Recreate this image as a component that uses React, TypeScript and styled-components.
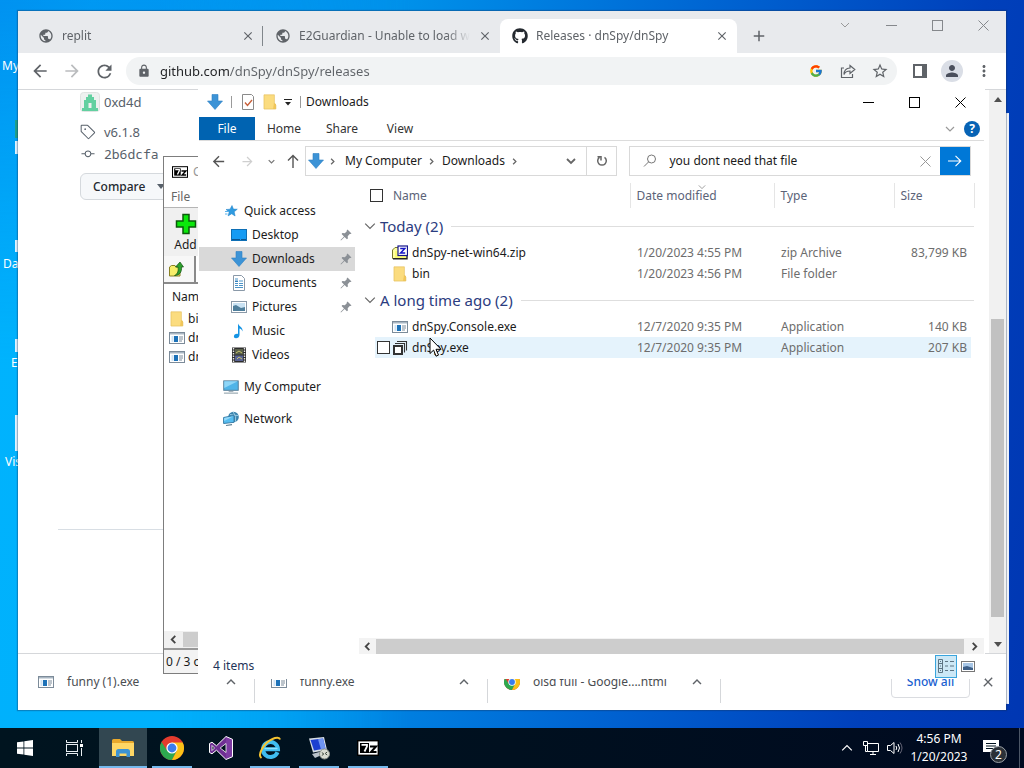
import React from "react";
import styled, { createGlobalStyle, css } from "styled-components";
import {
  MdPublic,
  MdArrowBack,
  MdArrowForward,
  MdRefresh,
  MdLock,
  MdStarBorder,
  MdPerson,
  MdMoreVert,
  MdClose,
  MdAdd,
  MdExpandLess,
} from "react-icons/md";
import { FaGithub } from "react-icons/fa";
import { FcGoogle } from "react-icons/fc";
import { GoTag, GoGitCommit } from "react-icons/go";

const Global = createGlobalStyle`
  *, *::before, *::after { box-sizing: border-box; }
  html, body, #root { height: 100%; }
  body {
    margin: 0;
    overflow: hidden;
    font-family: "Segoe UI", "Noto Sans", "Open Sans", sans-serif;
    font-size: 12px;
    line-height: 16px;
    color: #1b1b1b;
  }
  button, input { font: inherit; color: inherit; }
  button { background: none; border: 0; padding: 0; margin: 0; }
  svg { display: block; flex: none; }
`;

/* ---------- desktop ---------- */

const Desktop = styled.div`
  height: 100vh;
  display: flex;
  flex-direction: column;
  background: linear-gradient(100deg, #0098f2 0%, #00a4f6 8%, #0091ea 35%, #0064d2 62%, #0040bb 85%, #0036b2 100%);
`;

const Workspace = styled.main`
  position: relative;
  flex: 1;
  min-height: 0;
  overflow: hidden;
`;

const LeftShade = styled.div`
  position: absolute;
  inset: 0 auto 0 0;
  width: 40%;
  background: linear-gradient(180deg, rgba(0, 140, 238, 0.5), rgba(0, 180, 253, 0.95) 50%, rgba(0, 178, 252, 0.95));
  mask-image: linear-gradient(90deg, #000 40%, transparent);
`;

const Shortcut = styled.span<{ $top: number; $left: number }>`
  position: absolute;
  top: ${(p) => p.$top}px;
  left: ${(p) => p.$left}px;
  color: #fff;
`;

const ShortcutIcon = styled.span<{ $top: number; $height: number; $color?: string }>`
  position: absolute;
  left: 15px;
  top: ${(p) => p.$top}px;
  width: 20px;
  height: ${(p) => p.$height}px;
  background: ${(p) => p.$color ?? "#dff3ff"};
`;

const BackWindow = styled.div`
  position: absolute;
  inset: 113px 15px 24px 120px;
  background: #fff;
  border: 1px solid #e8eefa;
`;

/* ---------- browser ---------- */

const Browser = styled.section`
  position: absolute;
  inset: 11px 18px 18px 18px;
  display: flex;
  flex-direction: column;
  background: #fff;
  box-shadow: 0 0 1px 1px rgba(20, 50, 90, 0.35);
`;

const TabStrip = styled.div`
  height: 42px;
  display: flex;
  align-items: flex-end;
  padding-left: 8px;
  background: #e8eaed;
`;

const Tab = styled.div<{ $active?: boolean; $divider?: boolean }>`
  position: relative;
  flex: 0 1 237px;
  min-width: 0;
  height: 34px;
  display: flex;
  align-items: center;
  gap: 8px;
  padding: 0 8px 0 12px;
  color: #5f6368;
  border-radius: 8px 8px 0 0;
  ${(p) => p.$active && css`background: #fff;`}
  ${(p) =>
    p.$divider &&
    css`
      &::after {
        content: "";
        position: absolute;
        right: 0;
        top: 7px;
        width: 1px;
        height: 20px;
        background: #80868b;
      }
    `}
`;

const TabTitle = styled.span`
  flex: 1;
  min-width: 0;
  overflow: hidden;
  white-space: nowrap;
  mask-image: linear-gradient(90deg, #000 calc(100% - 24px), transparent);
`;

const IconButton = styled.button<{ $w?: number; $h?: number; $color?: string }>`
  flex: none;
  width: ${(p) => p.$w ?? 32}px;
  height: ${(p) => p.$h ?? 28}px;
  display: flex;
  align-items: center;
  justify-content: center;
  color: ${(p) => p.$color ?? "#5f6368"};
`;

const Spacer = styled.div`
  flex: 1;
`;

const CaptionButtons = styled.div`
  display: flex;
  align-self: flex-start;
`;

const BrowserToolbar = styled.div`
  height: 37px;
  display: flex;
  align-items: center;
  padding: 0 6px;
  border-bottom: 1px solid #d5d7da;
`;

const Omnibox = styled.div`
  flex: 1;
  height: 28px;
  display: flex;
  align-items: center;
  margin: 0 7px 0 6px;
  padding: 0 1px 0 11px;
  border-radius: 14px;
  background: #f1f3f4;
`;

const Url = styled.input`
  flex: 1;
  min-width: 0;
  margin-left: 9px;
  padding: 0;
  border: 0;
  outline: 0;
  font-size: 13px;
  line-height: 20px;
  color: transparent;
  background: linear-gradient(90deg, #202124 69px, #5f6368 69px);
  background-clip: text;
`;

const Avatar = styled.span`
  width: 22px;
  height: 22px;
  border-radius: 50%;
  display: flex;
  align-items: center;
  justify-content: center;
  background: #dadee6;
  color: #4a4f5c;
`;

const Page = styled.div`
  flex: 1;
  min-height: 0;
  display: flex;
  justify-content: space-between;
`;

const Release = styled.div`
  width: 300px;
  padding: 2px 0 0 40px;
  color: #57606a;
  font-size: 13px;
  line-height: 20px;
`;

const Meta = styled.div<{ $space: number; $mono?: boolean; $tight?: boolean }>`
  height: 20px;
  display: flex;
  align-items: center;
  gap: ${(p) => (p.$tight ? 4 : 8)}px;
  margin: 0 0 ${(p) => p.$space}px 22px;
  ${(p) => p.$mono && css`font-family: "Noto Sans Mono", "DejaVu Sans Mono", monospace;`}
`;

const Compare = styled.button`
  height: 27px;
  display: flex;
  align-items: center;
  gap: 12px;
  margin-left: 22px;
  padding: 0 12px;
  border: 1px solid #d5d9dd;
  border-radius: 6px;
  background: #f6f8fa;
  color: #24292f;
  font-size: 12px;
  font-weight: 500;
`;

const PageRule = styled.hr`
  margin: 329px 0 0;
  border: 0;
  border-top: 1px solid #d8dee4;
`;

const VScroll = styled.div`
  width: 17px;
  display: flex;
  flex-direction: column;
  align-items: center;
  background: #f1f1f1;
`;

const VThumb = styled.div`
  width: 13px;
  height: 298px;
  margin: 211px 0 auto;
  background: #c1c1c1;
`;

const Shelf = styled.div`
  height: 57px;
  display: flex;
  align-items: center;
  padding: 0 2px 0 4px;
  border-top: 1px solid #d5d7da;
`;

const Download = styled.div`
  flex: 0 1 233px;
  height: 42px;
  display: flex;
  align-items: center;
  gap: 13px;
  padding: 0 15px 0 16px;
  border-right: 1px solid #d5d7da;
  color: #4a4d51;
  white-space: nowrap;
`;

const DownloadName = styled.span`
  flex: 1;
`;

const ShowAll = styled.button`
  width: 79px;
  height: 32px;
  margin-right: 2px;
  border: 1px solid #dadce0;
  border-radius: 4px;
  color: #1a5fd0;
  font-weight: 500;
`;

/* ---------- archive manager ---------- */

const Archive = styled.section`
  position: absolute;
  inset: 156px 380px 54px 163px;
  display: flex;
  flex-direction: column;
  background: #fff;
  border: 1px solid #7d7d7d;
`;

const ArchiveTitle = styled.div`
  height: 29px;
  display: flex;
  align-items: center;
  gap: 5px;
  padding-left: 8px;
  color: #999;
`;

const ArchiveMenu = styled.div`
  height: 22px;
  display: flex;
  align-items: center;
  padding: 0 7px;
  border-bottom: 1px solid #b5b5b5;
  color: #666;
`;

const ArchiveTools = styled.div`
  height: 48px;
  padding: 5px 3px;
  background: #f0f0f0;
`;

const ToolButton = styled.button`
  width: 37px;
  display: flex;
  flex-direction: column;
  align-items: center;
  gap: 2px;
`;

const ArchivePath = styled.div`
  height: 28px;
  display: flex;
  align-items: center;
  gap: 8px;
  padding-left: 4px;
  background: #f7f7f7;
  border-bottom: 2px solid #8a8a8a;
`;

const PathField = styled.div`
  flex: 1;
  height: 26px;
  border-left: 2px solid #8a8a8a;
  background: #fff;
`;

const ArchiveList = styled.div`
  flex: 1;
  padding-left: 5px;
`;

const ArchiveHead = styled.div`
  height: 25px;
  padding: 5px 3px;
`;

const ArchiveRow = styled.div`
  height: 19px;
  display: flex;
  align-items: center;
  gap: 3px;
`;

const ArchiveScroll = styled.div`
  height: 19px;
  display: flex;
  align-items: center;
  border-bottom: 2px solid #999;
  background: #f0f0f0;
`;

const ArchiveStatus = styled.div`
  height: 23px;
  padding: 4px 2px;
  background: #f3f3f3;
`;

/* ---------- file explorer ---------- */

const Explorer = styled.section`
  position: absolute;
  inset: 89px 39px 49px 198px;
  display: flex;
  flex-direction: column;
  background: #fff;
  border: 1px solid #fff;
`;

const ExplorerTitle = styled.header`
  height: 24px;
  display: flex;
  align-items: center;
  padding-left: 8px;
`;

const Bar = styled.span`
  width: 1px;
  height: 12px;
  background: #9a9a9a;
`;

const QuickTools = styled.div<{ $tight?: boolean }>`
  display: flex;
  align-items: center;
  gap: ${(p) => (p.$tight ? 6 : 8)}px;
`;

const TitleText = styled.span`
  margin-left: 5px;
`;

const Ribbon = styled.nav`
  height: 27px;
  display: flex;
  align-items: center;
  padding-top: 3px;
  border-bottom: 1px solid #dcdcdc;
`;

const RibbonTab = styled.button<{ $file?: boolean }>`
  width: ${(p) => (p.$file ? 56 : 58)}px;
  height: 23px;
  background: ${(p) => (p.$file ? "#0063b1" : "transparent")};
  color: ${(p) => (p.$file ? "#fff" : "#333")};
`;

const Help = styled.button`
  width: 16px;
  height: 16px;
  margin: 0 4px 0 5px;
  border-radius: 50%;
  background: #0763b5;
  color: #fff;
  font-weight: 700;
  line-height: 16px;
`;

const AddressRow = styled.div`
  height: 40px;
  display: flex;
  align-items: center;
  padding: 0 13px 0 5px;
`;

const AddressBar = styled.div`
  flex: 10 1 312px;
  max-width: 340px;
  height: 30px;
  display: flex;
  align-items: center;
  margin: 0 12px 0 0;
  border: 1px solid #d9d9d9;
`;

const Crumb = styled.button`
  padding: 0 6px 0 7px;
  white-space: nowrap;
`;

const Refresh = styled(IconButton)`
  border-left: 1px solid #d9d9d9;
`;

const Search = styled.form`
  flex: 11 1 341px;
  height: 30px;
  display: flex;
  align-items: center;
  border: 1px solid #d9d9d9;
  padding-left: 13px;
`;

const SearchInput = styled.input`
  flex: 1;
  min-width: 0;
  margin-left: 12px;
  padding: 0;
  border: 0;
  outline: 0;
`;

const Go = styled(IconButton)`
  background: #0078d7;
`;

const ExplorerBody = styled.div`
  flex: 1;
  min-height: 0;
  display: flex;
  padding-top: 2px;
`;

const Sidebar = styled.aside`
  width: 156px;
  flex: none;
  padding-top: 16px;
`;

const NavItem = styled.a<{ $level?: number; $selected?: boolean; $gap?: boolean }>`
  height: 24px;
  display: flex;
  align-items: center;
  gap: 5px;
  margin-top: ${(p) => (p.$gap ? 8 : 0)}px;
  padding: 0 3px 0 ${(p) => (p.$level ? 32 : 24)}px;
  background: ${(p) => (p.$selected ? "#d9d9d9" : "transparent")};
  color: #1b1b1b;
  text-decoration: none;
`;

const NavLabel = styled.span`
  flex: 1;
  white-space: nowrap;
`;

const Files = styled.div`
  flex: 1;
  min-width: 0;
  display: flex;
  flex-direction: column;
  margin-left: 4px;
`;

const Table = styled.table`
  width: 100%;
  table-layout: fixed;
  border-collapse: collapse;
  white-space: nowrap;
  margin-bottom: auto;
`;

const HeadCell = styled.th`
  position: relative;
  height: 25px;
  padding: 0 6px;
  border-right: 1px solid #e5e5e5;
  text-align: left;
  font-weight: 400;
  color: #5b6378;
`;

const SortMark = styled.span`
  position: absolute;
  top: 0;
  left: calc(50% - 4px);
`;

const NameCell = styled.div`
  display: flex;
  align-items: center;
  gap: 10px;
  padding-left: 5px;
`;

const Check = styled.input`
  appearance: none;
  flex: none;
  width: 13px;
  height: 13px;
  margin: 0;
  border: 1px solid #333;
  background: #fff;
`;

const RowCheck = styled(Check)`
  margin-right: -2px;
`;

const GroupCell = styled.th<{ $first?: boolean }>`
  height: ${(p) => (p.$first ? 34 : 32)}px;
  padding: ${(p) => (p.$first ? 2 : 0)}px 10px 0 5px;
  font-weight: 400;
`;

const Group = styled.div`
  display: flex;
  align-items: center;
  gap: 4px;
  font-size: 15px;
  line-height: 20px;
  color: #2b3c80;

  &::after {
    content: "";
    flex: 1;
    height: 1px;
    margin-left: 4px;
    background: #dedede;
  }
`;

const FileRow = styled.tr<{ $hover?: boolean }>`
  height: 21px;
  ${(p) =>
    p.$hover &&
    css`
      background: linear-gradient(90deg, transparent 16px, #e5f3fc 16px, #e5f3fc calc(100% - 13px), transparent calc(100% - 13px));
    `}
`;

const Cell = styled.td<{ $right?: boolean }>`
  padding: 0 7px;
  color: #6d6d6d;
  text-align: ${(p) => (p.$right ? "right" : "left")};
`;

const FileName = styled.div<{ $hover?: boolean }>`
  display: flex;
  align-items: center;
  gap: 4px;
  padding-left: ${(p) => (p.$hover ? 11 : 26)}px;
  color: #1b1b1b;
`;

const HScroll = styled.div`
  height: 16px;
  flex: none;
  display: flex;
  align-items: center;
  background: #f3f3f3;
`;

const HThumb = styled.div`
  flex: 1;
  height: 15px;
  background: #cdcdcd;
`;

const StatusBar = styled.footer`
  height: 24px;
  display: flex;
  align-items: center;
  justify-content: space-between;
  padding: 0 9px 0 14px;
  color: #1e3358;
`;

const Views = styled.div`
  display: flex;
  align-items: center;
  gap: 4px;
`;

const ViewButton = styled(IconButton)<{ $on?: boolean }>`
  ${(p) => p.$on && css`background: #cce8f6; border: 1px solid #3aa5dd;`}
`;

const Pointer = styled.svg`
  position: absolute;
  left: 429px;
  top: 337px;
`;

/* ---------- taskbar ---------- */

const Taskbar = styled.nav`
  height: 40px;
  flex: none;
  display: flex;
  padding-left: 1px;
  background: linear-gradient(90deg, #00141f, #00101f 50%, #000a20);
  color: #fff;
`;

const TaskButton = styled.button<{ $open?: boolean; $active?: boolean }>`
  position: relative;
  width: 48px;
  margin-right: 1px;
  display: flex;
  align-items: center;
  justify-content: center;
  background: ${(p) => (p.$active ? "#324751" : "transparent")};
  ${(p) =>
    (p.$open || p.$active) &&
    css`
      &::after {
        content: "";
        position: absolute;
        bottom: 0;
        left: ${p.$active ? 0 : 4}px;
        right: ${p.$active ? 0 : 4}px;
        height: 2px;
        background: #76b9ed;
      }
    `}
`;

const TrayButton = styled.button`
  width: 24px;
  display: flex;
  align-items: center;
  justify-content: center;
`;

const Clock = styled.button`
  width: 64px;
  line-height: 18px;
  white-space: nowrap;
`;

const Notice = styled.button`
  position: relative;
  width: 40px;
  margin-right: 8px;
  display: flex;
  align-items: center;
  justify-content: center;
`;

const Badge = styled.span`
  position: absolute;
  left: 19px;
  top: 18px;
  width: 17px;
  height: 17px;
  border: 1px solid #9aa0a6;
  border-radius: 50%;
  background: #2b3138;
  font-size: 12px;
  line-height: 15px;
  text-align: center;
`;

const PeekEdge = styled.div`
  width: 5px;
  border-left: 1px solid #4c5666;
`;

/* ---------- drawings ---------- */

const DownArrow = ({ size = 16 }: { size?: number }) => (
  <svg width={size} height={size} viewBox="0 0 16 16">
    <path d="M5 .5h6V7h4.5L8 15.5.5 7H5z" fill="#3c93d6" stroke="#2b7fc4" strokeWidth=".6" />
  </svg>
);

type ChevronProps = { dir?: "down" | "right" | "left" | "up"; size?: number; color?: string; weight?: number };

const Chevron = ({ dir = "down", size = 10, color = "#666", weight = 1.2 }: ChevronProps) => {
  const paths = { down: "M1 3l4 4 4-4", up: "M1 7l4-4 4 4", right: "M3 1l4 4-4 4", left: "M7 1L3 5l4 4" };
  return (
    <svg width={size} height={size} viewBox="0 0 10 10" fill="none" stroke={color} strokeWidth={weight}>
      <path d={paths[dir]} />
    </svg>
  );
};

const CaptionIcon = ({ kind, color }: { kind: "min" | "max" | "close"; color: string }) => (
  <svg width="11" height="11" viewBox="0 0 11 11" fill="none" stroke={color}>
    {kind === "min" && <path d="M0 5.5h11" />}
    {kind === "max" && <rect x=".5" y=".5" width="10" height="10" />}
    {kind === "close" && <path d="M.5.5l10 10M10.5.5l-10 10" />}
  </svg>
);

const Folder = () => (
  <svg width="16" height="16" viewBox="0 0 16 16">
    <path d="M2 1h10v9l2 1v4H2z" fill="#fbdc7f" />
    <path d="M12 9l2 1v5h-3z" fill="#f2c659" />
    <path d="M2 .8h10.4V10l1.4 1v4H2z" fill="none" stroke="#e9c462" strokeWidth=".8" />
  </svg>
);

const AppFile = () => (
  <svg width="16" height="16" viewBox="0 0 16 16">
    <rect x=".5" y="2.5" width="15" height="11" fill="#fff" stroke="#7c8b99" />
    <path d="M1 3h14v1.5H1z" fill="#a9b6c2" />
    <rect x="2.5" y="6" width="2" height="6" fill="#cfe3f4" />
    <rect x="5" y="6" width="4" height="6" fill="#1d72b8" />
    <path d="M10 7h4M10 9h4M10 11h3" stroke="#7c8b99" />
  </svg>
);

const ZipFile = () => (
  <svg width="16" height="16" viewBox="0 0 16 16">
    <path d="M.5 5L3 2.500h4V13.500H.5z" fill="#ffffa0" stroke="#77772a" />
    <path d="M3 6h11v7.500H3z" fill="#fbfb74" />
    <path d="M1 13.700h14V10" fill="none" stroke="#222" strokeWidth="1.400" />
    <rect x="6" y="1" width="9.500" height="9.500" fill="#fff" stroke="#14148c" strokeWidth="1.200" />
    <path d="M8.200 3.500h4.600l-4.200 4.500h4.600" fill="none" stroke="#1616c8" strokeWidth="1.500" />
  </svg>
);

const StackFile = () => (
  <svg width="16" height="16" viewBox="0 0 16 16" fill="none" stroke="#333">
    <path d="M5 1.500h9.500v9M3 3.500h9.500v9" strokeWidth="1.100" />
    <rect x="2" y="6" width="8" height="8" strokeWidth="2" fill="#fff" />
  </svg>
);

const SevenZip = ({ w = 16, h = 12 }: { w?: number; h?: number }) => (
  <svg width={w} height={h} viewBox="0 0 22 16">
    <rect width="22" height="16" fill="#fff" />
    <rect x=".7" y=".7" width="20.600" height="14.600" fill="none" stroke="#000" strokeWidth="1.400" />
    <path d="M3 3h9v10H3z" fill="#000" />
    <path d="M4.500 4.800h5.500v1.500L7.500 11.500" fill="none" stroke="#fff" strokeWidth="1.800" />
    <path d="M13 6.500h6L14 12h5.500" fill="none" stroke="#000" strokeWidth="2" />
  </svg>
);

const PinIcon = () => (
  <svg width="12" height="12" viewBox="0 0 12 12">
    <path d="M7.500.5l4 4-1 .6-.8-.1-2 2.200.2 2.300-1 .7L4.600 8 1 11.400l-.5-.4L4 7.400 1.600 5.100l.8-1 2.400.2 2-2L6.700 1.400z" fill="#8b9096" />
  </svg>
);

const sideIcons: Record<string, React.ReactNode> = {
  star: (
    <svg width="16" height="16" viewBox="0 0 16 16">
      <path d="M9 2.500l1.400 3.600 3.900.1-3.100 2.600.9 4.200-3.400-2.200-3.600 2.100 1.100-4L3 6.500l4-.3z" fill="#2f9be0" stroke="#1d7fc6" strokeWidth=".5" />
      <path d="M2 8.500h3M2 11h2.500" stroke="#58b3ec" />
    </svg>
  ),
  desktop: (
    <svg width="16" height="16" viewBox="0 0 16 16">
      <rect x=".5" y="2.500" width="15" height="11" fill="#169bf3" stroke="#0e6fb5" />
      <path d="M1 12.500h14" stroke="#0b5590" strokeDasharray="8 1" />
    </svg>
  ),
  downloads: <DownArrow />,
  documents: (
    <svg width="16" height="16" viewBox="0 0 16 16">
      <path d="M2.500.5h8l3 3v12h-11z" fill="#fff" stroke="#8a99a8" />
      <path d="M4 4h3M8 6h4M4 8.500h3M8 8.500h4M4 10.500h3M8 10.500h4M4 12.500h8" stroke="#4b94c8" />
      <path d="M4 5.500h3v1.500H4z" fill="#2f7fbd" />
    </svg>
  ),
  pictures: (
    <svg width="16" height="16" viewBox="0 0 16 16">
      <rect x=".5" y="2.500" width="15" height="11" fill="#fff" stroke="#8a99a8" />
      <rect x="2" y="4" width="12" height="8" fill="#c9e2f3" />
      <path d="M2 7l3-1 5 3 4-1v4H2z" fill="#4f7f9c" />
    </svg>
  ),
  music: (
    <svg width="16" height="16" viewBox="0 0 16 16">
      <path d="M7 .5c1 3 5 3.500 4.600 8-.8-2-2-2.700-3.100-2.900V12c0 2-1.800 3.300-3.500 3.300S2.600 14 3 12.700c.5-1.500 2.400-2.200 4-1.700z" fill="#1594e4" />
    </svg>
  ),
  videos: (
    <svg width="16" height="16" viewBox="0 0 16 16">
      <rect x="1" y=".5" width="14" height="15" fill="#2d2d2d" />
      <path d="M2.500 1v15M13.500 1v15" stroke="#e6e6e6" strokeWidth="1.400" strokeDasharray="1.500 1" />
      <path d="M4 2h8v5.500H4z" fill="#59604a" />
      <path d="M4 8.500h8V14H4z" fill="#5a6494" />
      <path d="M5 6l3-2 3 2M6 12l2-2 3 2" stroke="#c9c36b" fill="none" />
    </svg>
  ),
  computer: (
    <svg width="16" height="16" viewBox="0 0 17 16">
      <rect x=".8" y="1.500" width="15.400" height="10" fill="#4fb4e8" stroke="#527a94" />
      <path d="M1.300 2h14.400L1.300 9z" fill="#8fd6f7" />
      <path d="M6 12.500h5M1 14.500h15" stroke="#7f929e" />
    </svg>
  ),
  network: (
    <svg width="16" height="16" viewBox="0 0 16 16">
      <circle cx="10.500" cy="6" r="5.300" fill="#3a83ad" />
      <path d="M7 3.500q4 1 8.500 1M10 .8q4 4 2.500 10" stroke="#9bcbe2" fill="none" />
      <path d="M.6 6.500L11 4.500v6.800L.6 12.500z" fill="#56bdf0" stroke="#3a7ea8" />
      <path d="M1.200 7l9.200-1.800L1.200 10z" fill="#97dafa" />
      <path d="M3 14.500l6-.8" stroke="#5b7d90" strokeWidth="1.200" />
    </svg>
  ),
};

const ChromeLogo = ({ size }: { size: number }) => (
  <svg width={size} height={size} viewBox="0 0 24 24">
    <circle cx="12" cy="12" r="12" fill="#e33b2e" />
    <path d="M7.200 14.800L1.600 6A12 12 0 0 0 12 24l4.800-9.200z" fill="#2da94f" />
    <path d="M12 6.500h10.700A12 12 0 0 1 12 24l4.800-9.200z" fill="#fbc117" />
    <circle cx="12" cy="12" r="5.600" fill="#fff" />
    <circle cx="12" cy="12" r="4.400" fill="#3b7ded" />
  </svg>
);

const taskIcons = {
  start: (
    <svg width="16" height="16" viewBox="0 0 16 16" fill="#fff">
      <path d="M0 2.300L6.500 1.400v6.200H0zM7.300 1.300L16 0v7.600H7.300zM0 8.400h6.500v6.200L0 13.700zM7.300 8.400H16V16l-8.700-1.200z" />
    </svg>
  ),
  view: (
    <svg width="17" height="16" viewBox="0 0 17 16" fill="none" stroke="#e8eef2">
      <path d="M.5 0v2.500h11V0M.5 16v-2.500h11V16M15.500 0v3M15.500 8v8" />
      <rect x=".5" y="4.500" width="11" height="7" />
      <rect x="14" y="4" width="3" height="3" fill="#fff" stroke="none" />
    </svg>
  ),
  explorer: (
    <svg width="22" height="18" viewBox="0 0 22 18">
      <path d="M0 1.500Q0 0 1.500 0H8l2 2h10.500Q22 2 22 3.500V17H0z" fill="#e9a92c" />
      <path d="M0 4h22v13H0z" fill="#ffd765" />
      <path d="M4 18v-5.500Q4 10 6.500 10h9q2.500 0 2.500 2.500V18h-3.500v-3.500h-7V18z" fill="#3d93d3" />
    </svg>
  ),
  vs: (
    <svg width="24" height="24" viewBox="0 0 24 24">
      <path d="M17 .5l6.500 2.800v17.400L17 23.500 7.500 14.200 3 17.800.5 16.500v-9L3 6.200l4.500 3.600z" fill="#6f2f93" />
      <path d="M17 .5l6.500 2.800v17.400L17 23.500z" fill="#7d3ba2" />
      <path d="M17 7.500v9L11.200 12zM3 9.500v5L5.500 12z" fill="#00121f" stroke="#fff" strokeWidth=".8" />
      <path d="M17 .5l6.500 2.800v17.400L17 23.500 7.500 14.200 3 17.800.5 16.500v-9L3 6.200l4.500 3.600z" fill="none" stroke="#fff" strokeWidth="1" />
    </svg>
  ),
  ie: (
    <svg width="24" height="24" viewBox="0 0 24 24" fill="none">
      <path d="M19.500 16.200A7.500 7.500 0 1 1 20 13.200H7" stroke="#3fbdf0" strokeWidth="4" />
      <path d="M6.500 12.500h13" stroke="#8fe0fb" strokeWidth="1.500" />
      <path d="M3.500 22C-1 19 6 6.500 14.500 3c4-1.800 7-1.500 7.500.5" stroke="#f5c431" strokeWidth="2" />
    </svg>
  ),
  remote: (
    <svg width="24" height="24" viewBox="0 0 24 24">
      <path d="M2 2.500L17 1l3 13-14 2.500z" fill="#d6dde4" />
      <path d="M3.500 4L16 2.600l2.500 10-11.500 2z" fill="#1c3fd0" />
      <path d="M11 3.200l5-.6 2.500 10-4.500.8z" fill="#6f95f2" />
      <path d="M5 18l11-3 3 2-11 5z" fill="#b9c2ca" />
      <circle cx="17.500" cy="18" r="5" fill="#d8dcd2" stroke="#8b918a" />
      <path d="M14.800 16.500l2 1.500-2 1.500M20.200 16l-2 1.500 2 1.500" stroke="#3f4a3f" fill="none" />
    </svg>
  ),
};

/* ---------- data ---------- */

const navigation = [
  { label: "Quick access", icon: "star", level: 0 },
  { label: "Desktop", icon: "desktop", level: 1, pin: true },
  { label: "Downloads", icon: "downloads", level: 1, pin: true, selected: true },
  { label: "Documents", icon: "documents", level: 1, pin: true },
  { label: "Pictures", icon: "pictures", level: 1, pin: true },
  { label: "Music", icon: "music", level: 1 },
  { label: "Videos", icon: "videos", level: 1 },
  { label: "My Computer", icon: "computer", level: 0, gap: true },
  { label: "Network", icon: "network", level: 0, gap: true },
];

const groups = [
  {
    title: "Today (2)",
    files: [
      { name: "dnSpy-net-win64.zip", date: "1/20/2023 4:55 PM", type: "zip Archive", size: "83,799 KB", icon: <ZipFile /> },
      { name: "bin", date: "1/20/2023 4:56 PM", type: "File folder", size: "", icon: <Folder /> },
    ],
  },
  {
    title: "A long time ago (2)",
    files: [
      { name: "dnSpy.Console.exe", date: "12/7/2020 9:35 PM", type: "Application", size: "140 KB", icon: <AppFile /> },
      { name: "dnSpy.exe", date: "12/7/2020 9:35 PM", type: "Application", size: "207 KB", icon: <StackFile />, hover: true },
    ],
  },
];

const downloads = [
  { name: "funny (1).exe", icon: <AppFile /> },
  { name: "funny.exe", icon: <AppFile /> },
  { name: "oisd full - Google....html", icon: <ChromeLogo size={16} /> },
];

/* ---------- windows ---------- */

const BrowserWindow = () => (
  <Browser>
    <TabStrip>
      <Tab $divider>
        <MdPublic size={16} />
        <TabTitle>replit</TabTitle>
        <IconButton $w={14} aria-label="Close replit"><MdClose size={14} /></IconButton>
      </Tab>
      <Tab>
        <MdPublic size={16} />
        <TabTitle>E2Guardian - Unable to load we</TabTitle>
        <IconButton $w={14} aria-label="Close E2Guardian"><MdClose size={14} /></IconButton>
      </Tab>
      <Tab $active>
        <FaGithub size={16} color="#24292f" />
        <TabTitle>Releases · dnSpy/dnSpy</TabTitle>
        <IconButton $w={14} aria-label="Close Releases"><MdClose size={14} /></IconButton>
      </Tab>
      <IconButton $w={44} $h={34} aria-label="New tab"><MdAdd size={18} /></IconButton>
      <Spacer />
      <CaptionButtons>
        <IconButton $w={46} aria-label="Search tabs"><Chevron color="#999" weight={1} /></IconButton>
        <IconButton $w={46} aria-label="Minimize"><CaptionIcon kind="min" color="#85888c" /></IconButton>
        <IconButton $w={46} aria-label="Maximize"><CaptionIcon kind="max" color="#85888c" /></IconButton>
        <IconButton $w={46} aria-label="Close"><CaptionIcon kind="close" color="#85888c" /></IconButton>
      </CaptionButtons>
    </TabStrip>
    <BrowserToolbar>
      <IconButton aria-label="Back"><MdArrowBack size={20} /></IconButton>
      <IconButton aria-label="Forward" $color="#babcbe"><MdArrowForward size={20} /></IconButton>
      <IconButton aria-label="Reload"><MdRefresh size={21} /></IconButton>
      <Omnibox>
        <MdLock size={14} color="#5f6368" />
        <Url aria-label="Address" defaultValue="github.com/dnSpy/dnSpy/releases" />
        <IconButton aria-label="Search with Google"><FcGoogle size={14} /></IconButton>
        <IconButton aria-label="Share">
          <svg width="16" height="16" viewBox="0 0 16 16" fill="none" stroke="#5f6368" strokeWidth="1.200">
            <path d="M4 5H1.500v9.500h11V11M10 2.500l4.800 4-4.800 4V8C7 8 5 9 4 11.500 4 7.500 6.500 5.200 10 5z" />
          </svg>
        </IconButton>
        <IconButton aria-label="Bookmark"><MdStarBorder size={18} /></IconButton>
      </Omnibox>
      <IconButton aria-label="Side panel">
        <svg width="14" height="14" viewBox="0 0 14 14">
          <rect x="1" y="1" width="12" height="12" fill="none" stroke="#5f6368" strokeWidth="2" />
          <path d="M9 1h4v12H9z" fill="#5f6368" />
        </svg>
      </IconButton>
      <IconButton aria-label="Profile"><Avatar><MdPerson size={18} /></Avatar></IconButton>
      <IconButton aria-label="Menu"><MdMoreVert size={18} /></IconButton>
    </BrowserToolbar>
    <Page>
      <Release>
        <Meta $space={10} $tight>
          <svg width="20" height="20" viewBox="0 0 20 20">
            <rect x=".5" y=".5" width="19" height="19" rx="3" fill="#eef1f0" stroke="#dfe3e1" />
            <path d="M2 19v-3h2V8h2V5h2V2.500h4V5h2v3h2v8h2v3zM8.500 16h3v-5h-3z" fill="#62d0a0" />
          </svg>
          0xd4d
        </Meta>
        <Meta $space={2}><GoTag size={16} />v6.1.8</Meta>
        <Meta $space={9} $mono><GoGitCommit size={16} />2b6dcfa</Meta>
        <Compare>
          Compare
          <svg width="8" height="5" viewBox="0 0 8 5"><path d="M0 0h8L4 5z" fill="#57606a" /></svg>
        </Compare>
        <PageRule />
      </Release>
      <VScroll>
        <IconButton $w={17} $h={18} aria-label="Scroll up"><svg width="8" height="5" viewBox="0 0 8 5"><path d="M4 0l4 5H0z" fill="#505050" /></svg></IconButton>
        <VThumb />
        <IconButton $w={17} $h={18} aria-label="Scroll down"><svg width="8" height="5" viewBox="0 0 8 5"><path d="M0 0h8L4 5z" fill="#505050" /></svg></IconButton>
      </VScroll>
    </Page>
    <Shelf>
      {downloads.map((d) => (
        <Download key={d.name}>
          {d.icon}
          <DownloadName>{d.name}</DownloadName>
          <IconButton $w={16} aria-label={`Options for ${d.name}`}><MdExpandLess size={18} /></IconButton>
        </Download>
      ))}
      <Spacer />
      <ShowAll>Show all</ShowAll>
      <IconButton aria-label="Close downloads"><MdClose size={16} /></IconButton>
    </Shelf>
  </Browser>
);

const ArchiveWindow = () => (
  <Archive>
    <ArchiveTitle><SevenZip />C</ArchiveTitle>
    <ArchiveMenu>File</ArchiveMenu>
    <ArchiveTools>
      <ToolButton>
        <svg width="22" height="22" viewBox="0 0 22 22">
          <path d="M8 1.500h6V8h6.500v6H14v6.500H8V14H1.500V8H8z" fill="#0be80b" stroke="#0b5a0b" strokeWidth="1.500" />
        </svg>
        Add
      </ToolButton>
    </ArchiveTools>
    <ArchivePath>
      <svg width="18" height="18" viewBox="0 0 18 18">
        <path d="M1.500 7l2-1.500H7l1 1.500h4v9H1.500z" fill="#f7ee6a" stroke="#8a8224" />
        <path d="M6.500 15.500c3.500-1.500 4-5 3.500-8.500H7.500l4.500-5 3.500 5H13.500c.5 5-2 8.500-7 8.500z" fill="#2da02d" stroke="#145214" strokeWidth=".7" />
      </svg>
      <PathField />
    </ArchivePath>
    <ArchiveList>
      <ArchiveHead>Nam</ArchiveHead>
      <ArchiveRow><Folder />bi</ArchiveRow>
      <ArchiveRow><AppFile />dn</ArchiveRow>
      <ArchiveRow><AppFile />dn</ArchiveRow>
    </ArchiveList>
    <ArchiveScroll>
      <IconButton $w={19} $h={17} aria-label="Scroll archive left"><Chevron dir="left" color="#444" weight={2} size={9} /></IconButton>
      <HThumb />
    </ArchiveScroll>
    <ArchiveStatus>0 / 3 o</ArchiveStatus>
  </Archive>
);

const ExplorerWindow = () => (
  <Explorer>
    <ExplorerTitle>
      <QuickTools>
        <DownArrow />
        <Bar />
        <QuickTools $tight>
          <svg width="16" height="16" viewBox="0 0 16 16">
            <path d="M2.500.5h9l2 2v13h-11z" fill="#fff" stroke="#8a8a8a" />
            <path d="M5 8.500l2.500 3L12 6" fill="none" stroke="#c8603a" strokeWidth="1.400" />
          </svg>
          <Folder />
          <svg width="8" height="7" viewBox="0 0 8 7"><path d="M0 .5h8" stroke="#222" /><path d="M1 3h6L4 6.500z" fill="#222" /></svg>
        </QuickTools>
        <Bar />
      </QuickTools>
      <TitleText>Downloads</TitleText>
      <Spacer />
      <IconButton $w={45} $h={24} aria-label="Minimize"><CaptionIcon kind="min" color="#000" /></IconButton>
      <IconButton $w={46} $h={24} aria-label="Maximize"><CaptionIcon kind="max" color="#000" /></IconButton>
      <IconButton $w={47} $h={24} aria-label="Close"><CaptionIcon kind="close" color="#000" /></IconButton>
    </ExplorerTitle>
    <Ribbon>
      <RibbonTab $file>File</RibbonTab>
      <RibbonTab>Home</RibbonTab>
      <RibbonTab>Share</RibbonTab>
      <RibbonTab>View</RibbonTab>
      <Spacer />
      <IconButton $w={18} $h={20} aria-label="Expand ribbon"><Chevron color="#999" /></IconButton>
      <Help aria-label="Help">?</Help>
    </Ribbon>
    <AddressRow>
      <IconButton $w={28} aria-label="Back"><MdArrowBack size={17} color="#555" /></IconButton>
      <IconButton $w={30} aria-label="Forward"><MdArrowForward size={15} color="#cfcfcf" /></IconButton>
      <IconButton $w={18} aria-label="Recent locations"><Chevron size={7} color="#777" weight={1.8} /></IconButton>
      <IconButton $w={25} aria-label="Up">
        <svg width="14" height="14" viewBox="0 0 14 14" fill="none" stroke="#555" strokeWidth="1.400"><path d="M7 14V1.500M2 6.500l5-5 5 5" /></svg>
      </IconButton>
      <AddressBar>
        <IconButton $w={20} aria-label="Downloads folder"><DownArrow /></IconButton>
        <IconButton $w={12} aria-label="Roots"><Chevron dir="right" size={7} weight={1.8} /></IconButton>
        <Crumb>My Computer</Crumb>
        <Chevron dir="right" size={7} weight={1.8} />
        <Crumb>Downloads</Crumb>
        <Chevron dir="right" size={7} weight={1.8} />
        <Spacer />
        <IconButton $w={30} aria-label="Previous locations"><Chevron weight={1.8} /></IconButton>
        <Refresh $w={30} aria-label="Refresh">
          <svg width="12" height="12" viewBox="0 0 12 12" fill="none" stroke="#666" strokeWidth="1.500"><path d="M8.500 2.300a4.300 4.300 0 1 1-5 0M1.500 1.800H5v3.700" /></svg>
        </Refresh>
      </AddressBar>
      <Search onSubmit={(e) => e.preventDefault()}>
        <svg width="14" height="14" viewBox="0 0 14 14" fill="none" stroke="#777"><circle cx="8.500" cy="5" r="4" /><path d="M5.700 7.800L1 12.500" /></svg>
        <SearchInput aria-label="Search Downloads" defaultValue="you dont need that file" />
        <IconButton $w={30} type="button" aria-label="Clear search"><CaptionIcon kind="close" color="#999" /></IconButton>
        <Go $w={30} aria-label="Search">
          <svg width="14" height="12" viewBox="0 0 14 12" fill="none" stroke="#fff" strokeWidth="1.100"><path d="M0 6h12.500M7.500.8L12.800 6l-5.300 5.200" /></svg>
        </Go>
      </Search>
    </AddressRow>
    <ExplorerBody>
      <Sidebar>
        {navigation.map((n) => (
          <NavItem key={n.label} href="#" $level={n.level} $selected={n.selected} $gap={n.gap}>
            {sideIcons[n.icon]}
            <NavLabel>{n.label}</NavLabel>
            {n.pin && <PinIcon />}
          </NavItem>
        ))}
      </Sidebar>
      <Files>
        <Table>
          <colgroup>
            <col />
            <col width={144} />
            <col width={120} />
            <col width={80} />
            <col width={10} />
          </colgroup>
          <thead>
            <tr>
              <HeadCell>
                <NameCell><Check type="checkbox" aria-label="Select all" />Name</NameCell>
              </HeadCell>
              <HeadCell>Date modified<SortMark><Chevron size={8} color="#888" weight={1} /></SortMark></HeadCell>
              <HeadCell>Type</HeadCell>
              <HeadCell>Size</HeadCell>
              <td />
            </tr>
          </thead>
          {groups.map((g, i) => (
            <tbody key={g.title}>
              <tr>
                <GroupCell colSpan={5} $first={i === 0}>
                  <Group>
                    <IconButton $w={12} $h={20} aria-label={`Collapse ${g.title}`}><Chevron size={12} weight={1} /></IconButton>
                    {g.title}
                  </Group>
                </GroupCell>
              </tr>
              {g.files.map((f) => (
                <FileRow key={f.name} $hover={f.hover}>
                  <Cell>
                    <FileName $hover={f.hover}>
                      {f.hover && <RowCheck type="checkbox" aria-label={`Select ${f.name}`} />}
                      {f.icon}
                      {f.name}
                    </FileName>
                  </Cell>
                  <Cell>{f.date}</Cell>
                  <Cell>{f.type}</Cell>
                  <Cell $right>{f.size}</Cell>
                  <td />
                </FileRow>
              ))}
            </tbody>
          ))}
        </Table>
        <HScroll>
          <IconButton $w={17} $h={15} aria-label="Scroll left"><Chevron dir="left" color="#444" weight={2} size={9} /></IconButton>
          <HThumb />
          <IconButton $w={20} $h={15} aria-label="Scroll right"><Chevron dir="right" color="#444" weight={2} size={9} /></IconButton>
        </HScroll>
      </Files>
    </ExplorerBody>
    <StatusBar>
      4 items
      <Views>
        <ViewButton $w={22} $h={23} $on aria-label="Details view">
          <svg width="16" height="14" viewBox="0 0 16 14" fill="none" stroke="#5d7483">
            <path d="M.5.5h4v13h-4zM.5 4.500h4M.5 9.500h4M2 2.500h1M2 7h1M2 11.500h1M7 2.500h3M12 2.500h4M7 7h3M12 7h4M7 11.500h3M12 11.500h4" />
          </svg>
        </ViewButton>
        <ViewButton $w={14} $h={23} aria-label="Large icons view">
          <svg width="14" height="11" viewBox="0 0 14 11"><rect x=".5" y=".5" width="13" height="10" fill="#fff" stroke="#777" /><path d="M2 2h10v7H2z" fill="#a7c6e6" /><path d="M2 6l4-1 6 2v2H2z" fill="#3d5f87" /></svg>
        </ViewButton>
      </Views>
    </StatusBar>
  </Explorer>
);

export default function App() {
  return (
    <Desktop>
      <Global />
      <Workspace>
        <LeftShade />
        <Shortcut $top={58} $left={2}>My</Shortcut>
        <ShortcutIcon $top={120} $height={18} $color="#1fa08a" />
        <ShortcutIcon $top={141} $height={13} />
        <Shortcut $top={256} $left={3}>Da</Shortcut>
        <ShortcutIcon $top={240} $height={12} />
        <Shortcut $top={355} $left={11}>E</Shortcut>
        <ShortcutIcon $top={339} $height={13} />
        <Shortcut $top={454} $left={5}>Vis</Shortcut>
        <ShortcutIcon $top={415} $height={36} />
        <BackWindow />
        <BrowserWindow />
        <ArchiveWindow />
        <ExplorerWindow />
        <Pointer width="14" height="21" viewBox="0 0 14 21">
          <path d="M1 1v15.500l3.600-3.400L7 19.200l2.500-1.100L7 12.300h5z" fill="#fff" stroke="#000" />
        </Pointer>
      </Workspace>
      <Taskbar>
        <TaskButton aria-label="Start">{taskIcons.start}</TaskButton>
        <TaskButton aria-label="Task view">{taskIcons.view}</TaskButton>
        <TaskButton aria-label="File Explorer" $active>{taskIcons.explorer}</TaskButton>
        <TaskButton aria-label="Chrome" $open><ChromeLogo size={24} /></TaskButton>
        <TaskButton aria-label="Visual Studio">{taskIcons.vs}</TaskButton>
        <TaskButton aria-label="Internet Explorer" $open>{taskIcons.ie}</TaskButton>
        <TaskButton aria-label="Remote tool" $open>{taskIcons.remote}</TaskButton>
        <TaskButton aria-label="7-Zip" $open><SevenZip w={22} h={16} /></TaskButton>
        <Spacer />
        <TrayButton aria-label="Hidden icons"><Chevron dir="up" color="#fff" size={12} weight={1} /></TrayButton>
        <TrayButton aria-label="Network">
          <svg width="16" height="14" viewBox="0 0 16 14" fill="none" stroke="#fff"><path d="M4.500 2.500h11v8h-11zM7 13.500h6M10 11v2.500M.5.500h4v4h-4zM2.500 4.500v6h2" /></svg>
        </TrayButton>
        <TrayButton aria-label="Volume">
          <svg width="16" height="14" viewBox="0 0 16 14" fill="none" stroke="#fff"><path d="M.5 4.500h3L7 1.500v11l-3.500-3h-3zM9 5q1.500 2 0 4M11 3q3 4 0 8" /><path d="M13 1.500q4 5.500 0 11" stroke="#667" /></svg>
        </TrayButton>
        <Clock>4:56 PM<br />1/20/2023</Clock>
        <Notice aria-label="2 notifications">
          <svg width="16" height="16" viewBox="0 0 16 16"><path d="M0 0h16v12h-4v4l-4-4H0z" fill="#fff" /><path d="M3 3.500h10M3 6h10M3 8.500h7" stroke="#00121f" /></svg>
          <Badge>2</Badge>
        </Notice>
        <PeekEdge />
      </Taskbar>
    </Desktop>
  );
}
